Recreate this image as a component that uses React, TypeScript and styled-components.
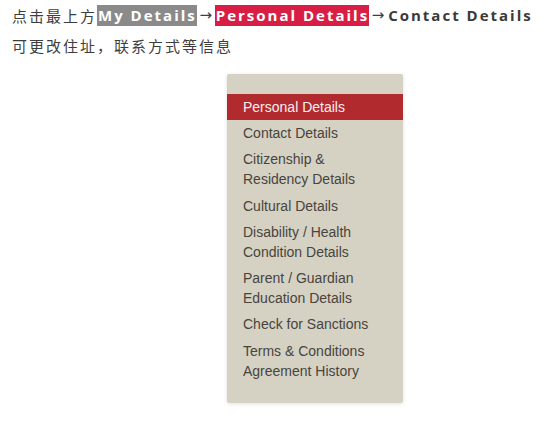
import React from "react";
import styled, { createGlobalStyle } from "styled-components";

const Global = createGlobalStyle`
  html, body { margin: 0; padding: 0; background: #fff; }
  body { font-family: "Noto Sans CJK SC", sans-serif; }
`;

const Page = styled.div`
  width: 559px;
  height: 421px;
  box-sizing: border-box;
  padding: 5px 0 0 12px;
  display: flex;
  flex-direction: column;
`;

const Line = styled.div`
  font-family: "Open Sans", "Noto Sans CJK SC", sans-serif;
  font-size: 14px;
  line-height: 21px;
  color: #3e3e3e;
  white-space: nowrap;
  display: flex;
  align-items: center;
`;

const Plain = styled.span`
  font-family: "Noto Sans CJK SC", sans-serif;
  font-size: 15px;
  letter-spacing: 2px;
  color: #3e3e3e;
`;

const Tag = styled.span<{ $bg?: string }>`
  font-weight: 700;
  font-size: 15px;
  letter-spacing: 2px;
  background: ${(p) => p.$bg || "transparent"};
  color: ${(p) => (p.$bg ? "#fff" : "#3a3a3a")};
  padding: 0 0 0 1px;
  line-height: 21px;
`;

const Arrow = styled.span`
  font-family: "DejaVu Sans", sans-serif;
  font-size: 15px;
  display: inline-block;
  width: 18px;
  text-align: center;
  color: #3e3e3e;
`;

const Second = styled.div`
  margin-top: 10px;
  font-size: 15px;
  line-height: 20px;
  letter-spacing: 2px;
  color: #3e3e3e;
`;

const Panel = styled.nav`
  align-self: flex-start;
  margin: 18px 0 0 215px;
  width: 176px;
  box-sizing: border-box;
  padding: 20px 0 19px;
  background: #d5d2c4;
  border-radius: 2px;
  box-shadow: 0 1px 4px rgba(0, 0, 0, 0.12);
  display: flex;
  flex-direction: column;
  font-family: "Liberation Sans", Arial, sans-serif;
  font-size: 14px;
`;

const Item = styled.div<{ $active?: boolean }>`
  padding: 3px 10px 3px 16px;
  line-height: 20.15px;
  background: ${(p) => (p.$active ? "#b02a2e" : "transparent")};
  color: ${(p) => (p.$active ? "#f7eeee" : "#48443d")};
`;

const items: { label: string[]; active?: boolean }[] = [
  { label: ["Personal Details"], active: true },
  { label: ["Contact Details"] },
  { label: ["Citizenship &", "Residency Details"] },
  { label: ["Cultural Details"] },
  { label: ["Disability / Health", "Condition Details"] },
  { label: ["Parent / Guardian", "Education Details"] },
  { label: ["Check for Sanctions"] },
  { label: ["Terms & Conditions", "Agreement History"] },
];

export default function App() {
  return (
    <>
      <Global />
      <Page>
        <Line>
          <Plain>点击最上方</Plain>
          <Tag $bg="#8a8a8a">My Details</Tag>
          <Arrow>→</Arrow>
          <Tag $bg="#d81e44">Personal Details</Tag>
          <Arrow>→</Arrow>
          <Tag>Contact Details</Tag>
        </Line>
        <Second>可更改住址，联系方式等信息</Second>
        <Panel>
          {items.map((it, i) => (
            <Item key={i} $active={it.active}>
              {it.label.map((l, j) => (
                <div key={j}>{l}</div>
              ))}
            </Item>
          ))}
        </Panel>
      </Page>
    </>
  );
}
